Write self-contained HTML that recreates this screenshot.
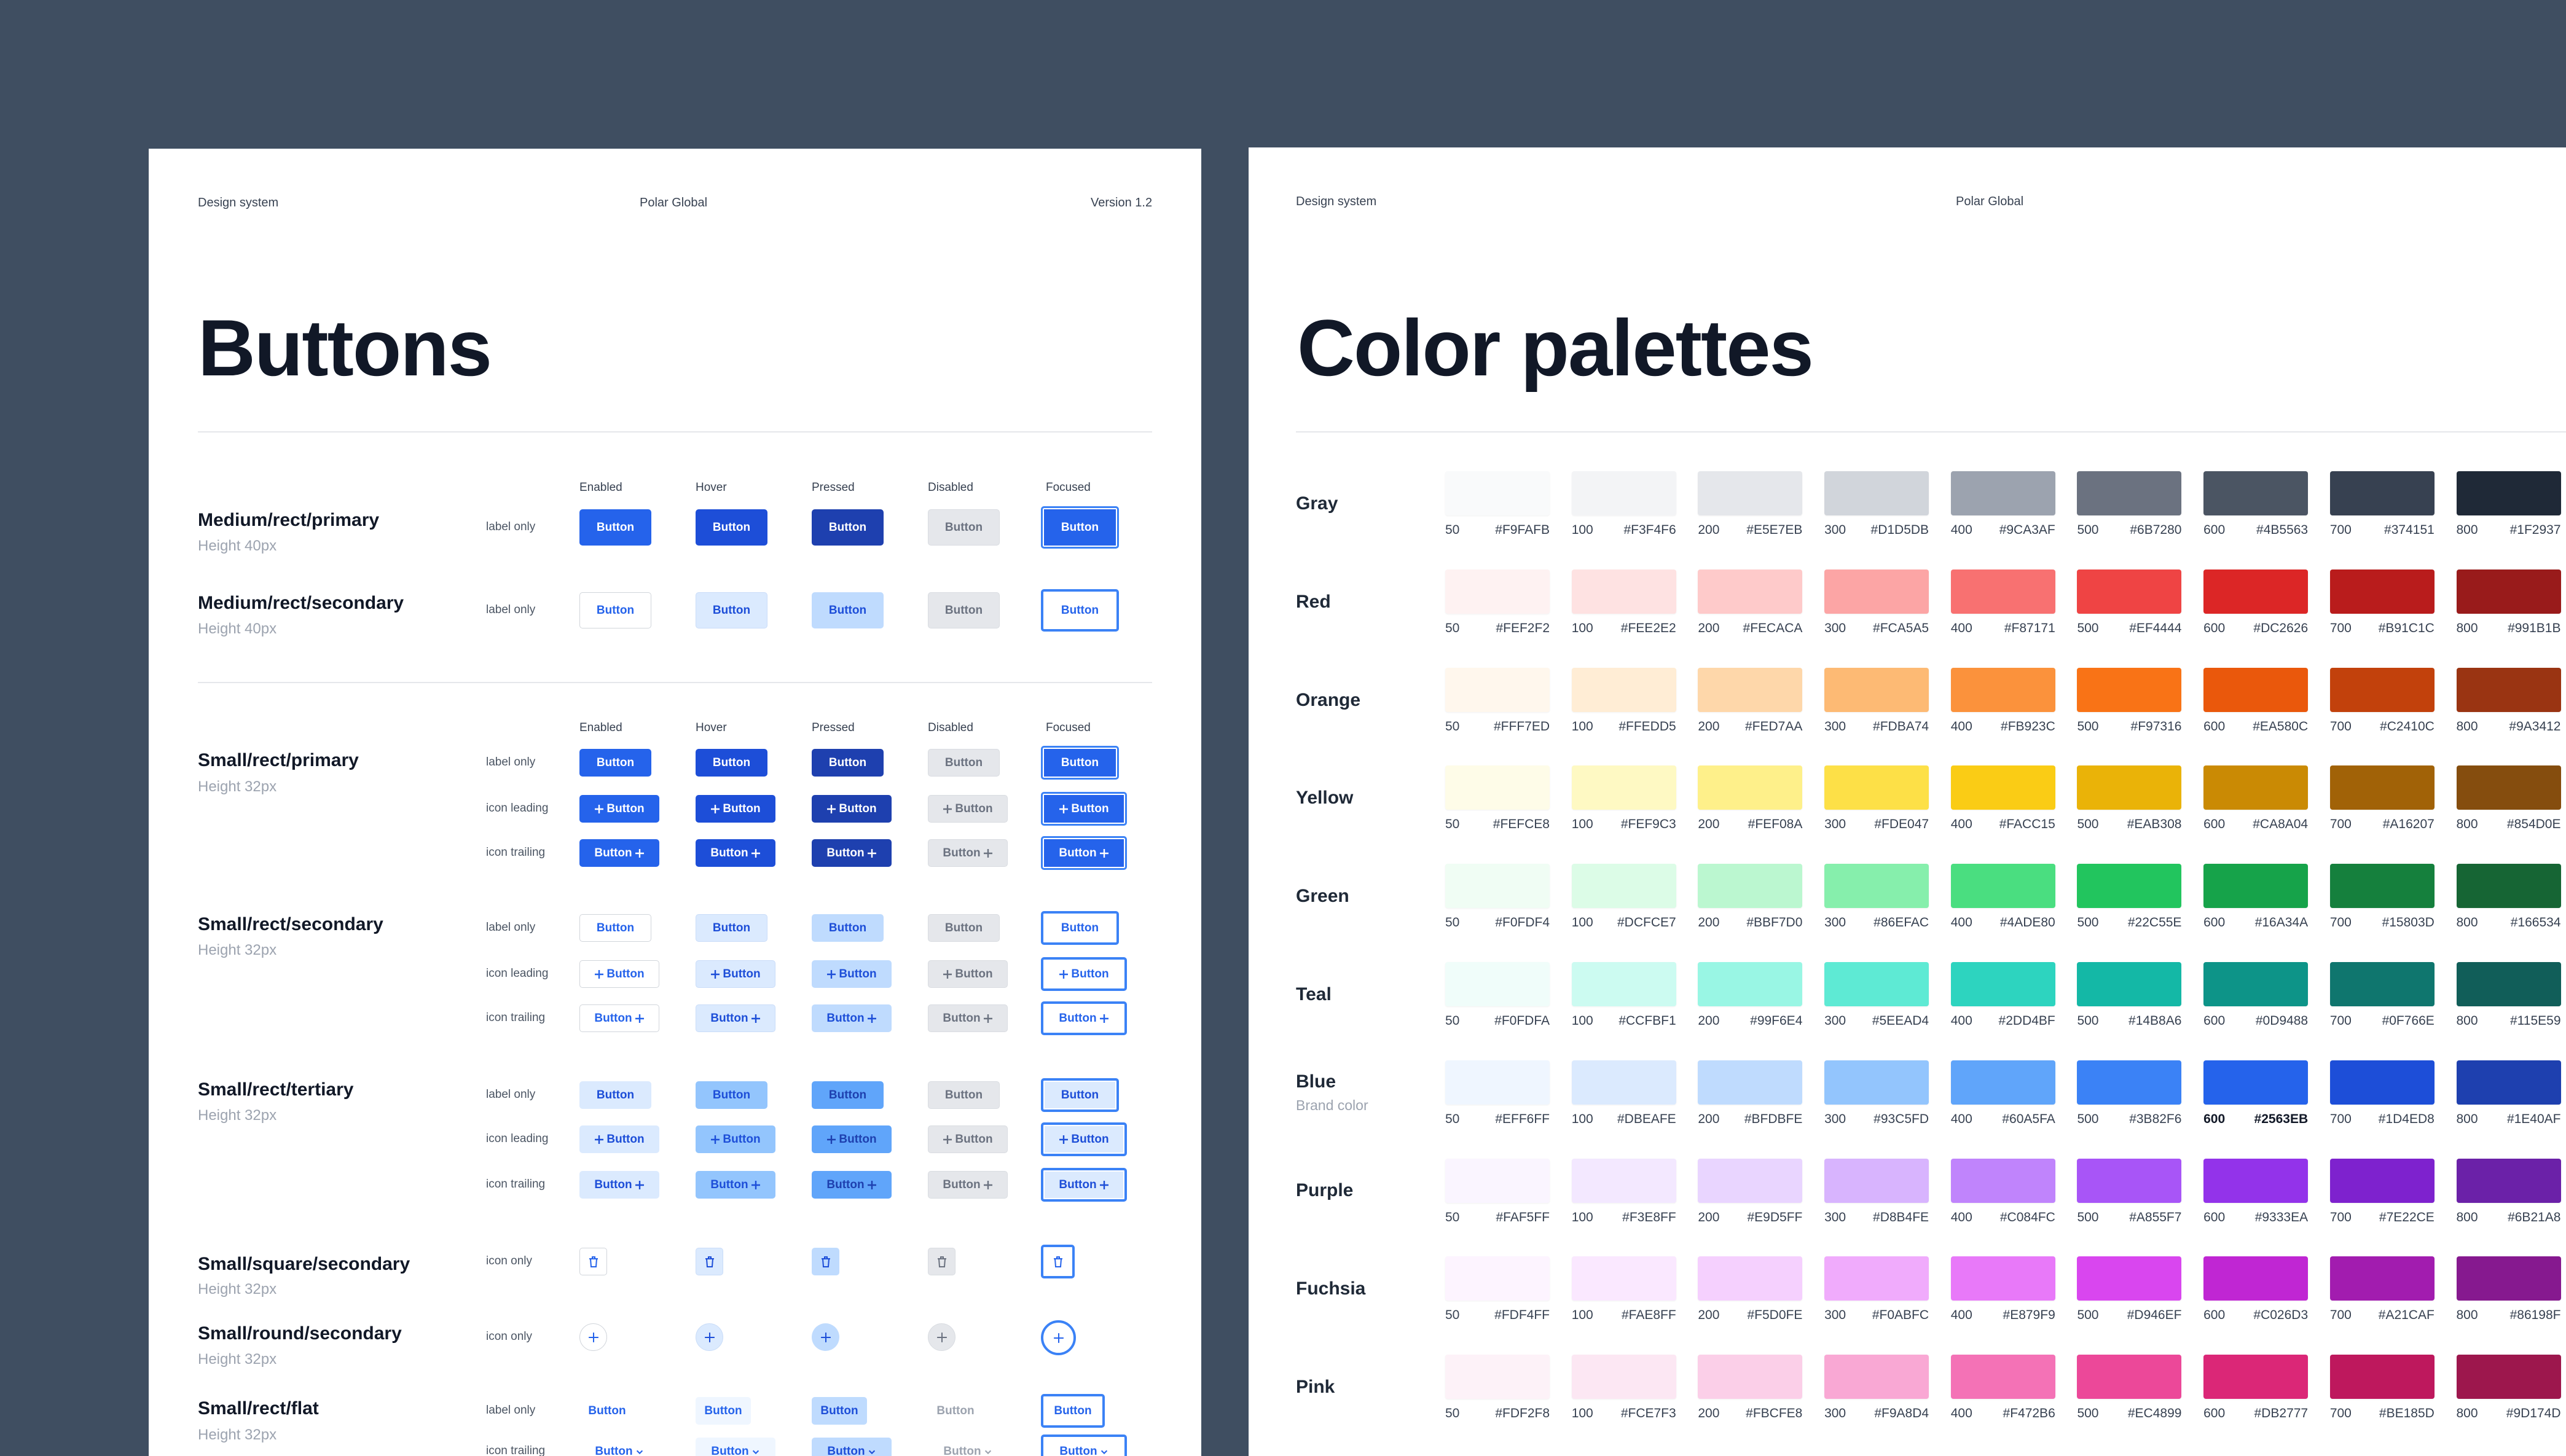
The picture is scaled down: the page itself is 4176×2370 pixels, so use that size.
<!DOCTYPE html>
<html><head><meta charset="utf-8">
<style>
*{margin:0;padding:0;box-sizing:border-box}
html{width:4176px;height:2370px;overflow:hidden}
body{width:4176px;height:2370px;background:#3F4E61;position:relative;overflow:hidden;font-family:"Liberation Sans",sans-serif;color:#111827}
.panel{position:absolute;background:#fff}
.t{position:absolute;white-space:nowrap;line-height:40px}
.hd{font-size:20px;color:#374151}
.title{position:absolute;font-size:130px;font-weight:bold;line-height:132px;letter-spacing:-2px;color:#111827;white-space:nowrap}
.hr{position:absolute;height:2px;background:#E5E7EB}
.lbl{font-size:30px;font-weight:bold;color:#111827}
.sub{font-size:24px;color:#9CA3AF}
.ch{font-size:19px;color:#374151}
.rl{font-size:19px;color:#4B5563}
.b{position:absolute;height:45px;width:117px;border-radius:5px;display:flex;align-items:center;justify-content:center;gap:4px;font-weight:bold;font-size:19px;white-space:nowrap}
.m{height:59px}
.w{width:130px}
.sq{width:45px}
.rd{width:45px;border-radius:50%}
.fl{width:90px}
.p0{background:#2563EB;color:#fff}
.p1{background:#1D4ED8;color:#fff}
.p2{background:#1E40AF;color:#fff}
.d{background:#E5E7EB;color:#6B7280;border:1.5px solid #D9DCE1}
.pf{background:#2563EB;color:#fff;border:3px solid #3B82F6;box-shadow:inset 0 0 0 2px #fff}
.s0{background:#fff;color:#2563EB;border:1.5px solid #D1D5DB}
.s1{background:#DBEAFE;color:#1D4ED8;border:1.5px solid #C9DCF8}
.s2{background:#BFDBFE;color:#1D4ED8}
.sf{background:#fff;color:#2563EB;border:4px solid #3B82F6}
.t0{background:#DBEAFE;color:#1D4ED8}
.t1{background:#93C5FD;color:#1D4ED8}
.t2{background:#60A5FA;color:#1E40AF}
.tf{background:#DBEAFE;color:#1D4ED8;border:4px solid #3B82F6;box-shadow:inset 0 0 0 2px #fff}
.f0{color:#2563EB}
.f1{background:#EFF6FF;color:#2563EB}
.f2{background:#BFDBFE;color:#1D4ED8}
.fd{color:#9CA3AF}
.rl2{font-size:30px;font-weight:bold;color:#1F2937}
.row{position:absolute;left:2352px;display:grid;grid-template-columns:repeat(9,170px);column-gap:35.7px}
.sw{height:72px;border-radius:4px;box-shadow:0 1px 2px rgba(0,0,0,.06)}
.lb{display:flex;justify-content:space-between;margin-top:12px;font-size:21px;line-height:24px;color:#374151;white-space:nowrap}
.lb.bd{font-weight:bold;color:#111827}
</style></head><body>

<!-- LEFT PANEL -->
<div class="panel" style="left:242px;top:242px;width:1713px;height:2128px"></div>
<div class="t hd" style="left:322px;top:310px">Design system</div>
<div class="t hd" style="left:1041px;top:310px">Polar Global</div>
<div class="t hd" style="left:1775px;top:310px;width:100px;text-align:right">Version 1.2</div>
<div class="title" style="left:322px;top:500px">Buttons</div>
<div class="hr" style="left:322px;top:702px;width:1553px"></div>
<div class="hr" style="left:322px;top:1110px;width:1553px"></div>

<div class="t ch" style="left:943px;top:774px">Enabled</div>
<div class="t ch" style="left:1132px;top:774px">Hover</div>
<div class="t ch" style="left:1321px;top:774px">Pressed</div>
<div class="t ch" style="left:1510px;top:774px">Disabled</div>
<div class="t ch" style="left:1702px;top:774px">Focused</div>
<div class="t ch" style="left:943px;top:1165px">Enabled</div>
<div class="t ch" style="left:1132px;top:1165px">Hover</div>
<div class="t ch" style="left:1321px;top:1165px">Pressed</div>
<div class="t ch" style="left:1510px;top:1165px">Disabled</div>
<div class="t ch" style="left:1702px;top:1165px">Focused</div>

<div class="t lbl" style="left:322px;top:827px">Medium/rect/primary</div>
<div class="t sub" style="left:322px;top:869px">Height 40px</div>
<div class="t lbl" style="left:322px;top:962px">Medium/rect/secondary</div>
<div class="t sub" style="left:322px;top:1004px">Height 40px</div>
<div class="t lbl" style="left:322px;top:1218px">Small/rect/primary</div>
<div class="t sub" style="left:322px;top:1261px">Height 32px</div>
<div class="t lbl" style="left:322px;top:1485px">Small/rect/secondary</div>
<div class="t sub" style="left:322px;top:1527px">Height 32px</div>
<div class="t lbl" style="left:322px;top:1754px">Small/rect/tertiary</div>
<div class="t sub" style="left:322px;top:1796px">Height 32px</div>
<div class="t lbl" style="left:322px;top:2038px">Small/square/secondary</div>
<div class="t sub" style="left:322px;top:2079px">Height 32px</div>
<div class="t lbl" style="left:322px;top:2151px">Small/round/secondary</div>
<div class="t sub" style="left:322px;top:2193px">Height 32px</div>
<div class="t lbl" style="left:322px;top:2273px">Small/rect/flat</div>
<div class="t sub" style="left:322px;top:2316px">Height 32px</div>

<div class="t rl" style="left:791px;top:838px">label only</div>
<div class="t rl" style="left:791px;top:973px">label only</div>
<div class="t rl" style="left:791px;top:1221px">label only</div>
<div class="t rl" style="left:791px;top:1296px">icon leading</div>
<div class="t rl" style="left:791px;top:1368px">icon trailing</div>
<div class="t rl" style="left:791px;top:1490px">label only</div>
<div class="t rl" style="left:791px;top:1565px">icon leading</div>
<div class="t rl" style="left:791px;top:1637px">icon trailing</div>
<div class="t rl" style="left:791px;top:1762px">label only</div>
<div class="t rl" style="left:791px;top:1834px">icon leading</div>
<div class="t rl" style="left:791px;top:1908px">icon trailing</div>
<div class="t rl" style="left:791px;top:2033px">icon only</div>
<div class="t rl" style="left:791px;top:2156px">icon only</div>
<div class="t rl" style="left:791px;top:2276px">label only</div>
<div class="t rl" style="left:791px;top:2342px">icon trailing</div>

<div class="b m p0" style="left:943px;top:829px">Button</div>
<div class="b m p1" style="left:1132px;top:829px">Button</div>
<div class="b m p2" style="left:1321px;top:829px">Button</div>
<div class="b m d" style="left:1510px;top:829px">Button</div>
<div class="b m pf" style="left:1694px;top:824px;width:127px;height:69px">Button</div>
<div class="b m s0" style="left:943px;top:964px">Button</div>
<div class="b m s1" style="left:1132px;top:964px">Button</div>
<div class="b m s2" style="left:1321px;top:964px">Button</div>
<div class="b m d" style="left:1510px;top:964px">Button</div>
<div class="b m sf" style="left:1694px;top:959px;width:127px;height:69px">Button</div>

<div class="b p0" style="left:943px;top:1219px">Button</div>
<div class="b p1" style="left:1132px;top:1219px">Button</div>
<div class="b p2" style="left:1321px;top:1219px">Button</div>
<div class="b d" style="left:1510px;top:1219px">Button</div>
<div class="b pf" style="left:1694px;top:1214px;width:127px;height:55px">Button</div>

<div class="b w p0" style="left:943px;top:1294px"><svg width="16" height="16" viewBox="0 0 16 16"><path d="M8 1v14M1 8h14" stroke="currentColor" stroke-width="2.4"/></svg>Button</div>
<div class="b w p1" style="left:1132px;top:1294px"><svg width="16" height="16" viewBox="0 0 16 16"><path d="M8 1v14M1 8h14" stroke="currentColor" stroke-width="2.4"/></svg>Button</div>
<div class="b w p2" style="left:1321px;top:1294px"><svg width="16" height="16" viewBox="0 0 16 16"><path d="M8 1v14M1 8h14" stroke="currentColor" stroke-width="2.4"/></svg>Button</div>
<div class="b w d" style="left:1510px;top:1294px"><svg width="16" height="16" viewBox="0 0 16 16"><path d="M8 1v14M1 8h14" stroke="currentColor" stroke-width="2.4"/></svg>Button</div>
<div class="b w pf" style="left:1694px;top:1289px;width:140px;height:55px"><svg width="16" height="16" viewBox="0 0 16 16"><path d="M8 1v14M1 8h14" stroke="currentColor" stroke-width="2.4"/></svg>Button</div>

<div class="b w p0" style="left:943px;top:1366px">Button<svg width="16" height="16" viewBox="0 0 16 16"><path d="M8 1v14M1 8h14" stroke="currentColor" stroke-width="2.4"/></svg></div>
<div class="b w p1" style="left:1132px;top:1366px">Button<svg width="16" height="16" viewBox="0 0 16 16"><path d="M8 1v14M1 8h14" stroke="currentColor" stroke-width="2.4"/></svg></div>
<div class="b w p2" style="left:1321px;top:1366px">Button<svg width="16" height="16" viewBox="0 0 16 16"><path d="M8 1v14M1 8h14" stroke="currentColor" stroke-width="2.4"/></svg></div>
<div class="b w d" style="left:1510px;top:1366px">Button<svg width="16" height="16" viewBox="0 0 16 16"><path d="M8 1v14M1 8h14" stroke="currentColor" stroke-width="2.4"/></svg></div>
<div class="b w pf" style="left:1694px;top:1361px;width:140px;height:55px">Button<svg width="16" height="16" viewBox="0 0 16 16"><path d="M8 1v14M1 8h14" stroke="currentColor" stroke-width="2.4"/></svg></div>

<div class="b s0" style="left:943px;top:1488px">Button</div>
<div class="b s1" style="left:1132px;top:1488px">Button</div>
<div class="b s2" style="left:1321px;top:1488px">Button</div>
<div class="b d" style="left:1510px;top:1488px">Button</div>
<div class="b sf" style="left:1694px;top:1483px;width:127px;height:55px">Button</div>

<div class="b w s0" style="left:943px;top:1563px"><svg width="16" height="16" viewBox="0 0 16 16"><path d="M8 1v14M1 8h14" stroke="currentColor" stroke-width="2.4"/></svg>Button</div>
<div class="b w s1" style="left:1132px;top:1563px"><svg width="16" height="16" viewBox="0 0 16 16"><path d="M8 1v14M1 8h14" stroke="currentColor" stroke-width="2.4"/></svg>Button</div>
<div class="b w s2" style="left:1321px;top:1563px"><svg width="16" height="16" viewBox="0 0 16 16"><path d="M8 1v14M1 8h14" stroke="currentColor" stroke-width="2.4"/></svg>Button</div>
<div class="b w d" style="left:1510px;top:1563px"><svg width="16" height="16" viewBox="0 0 16 16"><path d="M8 1v14M1 8h14" stroke="currentColor" stroke-width="2.4"/></svg>Button</div>
<div class="b w sf" style="left:1694px;top:1558px;width:140px;height:55px"><svg width="16" height="16" viewBox="0 0 16 16"><path d="M8 1v14M1 8h14" stroke="currentColor" stroke-width="2.4"/></svg>Button</div>

<div class="b w s0" style="left:943px;top:1635px">Button<svg width="16" height="16" viewBox="0 0 16 16"><path d="M8 1v14M1 8h14" stroke="currentColor" stroke-width="2.4"/></svg></div>
<div class="b w s1" style="left:1132px;top:1635px">Button<svg width="16" height="16" viewBox="0 0 16 16"><path d="M8 1v14M1 8h14" stroke="currentColor" stroke-width="2.4"/></svg></div>
<div class="b w s2" style="left:1321px;top:1635px">Button<svg width="16" height="16" viewBox="0 0 16 16"><path d="M8 1v14M1 8h14" stroke="currentColor" stroke-width="2.4"/></svg></div>
<div class="b w d" style="left:1510px;top:1635px">Button<svg width="16" height="16" viewBox="0 0 16 16"><path d="M8 1v14M1 8h14" stroke="currentColor" stroke-width="2.4"/></svg></div>
<div class="b w sf" style="left:1694px;top:1630px;width:140px;height:55px">Button<svg width="16" height="16" viewBox="0 0 16 16"><path d="M8 1v14M1 8h14" stroke="currentColor" stroke-width="2.4"/></svg></div>

<div class="b t0" style="left:943px;top:1760px">Button</div>
<div class="b t1" style="left:1132px;top:1760px">Button</div>
<div class="b t2" style="left:1321px;top:1760px">Button</div>
<div class="b d" style="left:1510px;top:1760px">Button</div>
<div class="b tf" style="left:1694px;top:1755px;width:127px;height:55px">Button</div>

<div class="b w t0" style="left:943px;top:1832px"><svg width="16" height="16" viewBox="0 0 16 16"><path d="M8 1v14M1 8h14" stroke="currentColor" stroke-width="2.4"/></svg>Button</div>
<div class="b w t1" style="left:1132px;top:1832px"><svg width="16" height="16" viewBox="0 0 16 16"><path d="M8 1v14M1 8h14" stroke="currentColor" stroke-width="2.4"/></svg>Button</div>
<div class="b w t2" style="left:1321px;top:1832px"><svg width="16" height="16" viewBox="0 0 16 16"><path d="M8 1v14M1 8h14" stroke="currentColor" stroke-width="2.4"/></svg>Button</div>
<div class="b w d" style="left:1510px;top:1832px"><svg width="16" height="16" viewBox="0 0 16 16"><path d="M8 1v14M1 8h14" stroke="currentColor" stroke-width="2.4"/></svg>Button</div>
<div class="b w tf" style="left:1694px;top:1827px;width:140px;height:55px"><svg width="16" height="16" viewBox="0 0 16 16"><path d="M8 1v14M1 8h14" stroke="currentColor" stroke-width="2.4"/></svg>Button</div>

<div class="b w t0" style="left:943px;top:1906px">Button<svg width="16" height="16" viewBox="0 0 16 16"><path d="M8 1v14M1 8h14" stroke="currentColor" stroke-width="2.4"/></svg></div>
<div class="b w t1" style="left:1132px;top:1906px">Button<svg width="16" height="16" viewBox="0 0 16 16"><path d="M8 1v14M1 8h14" stroke="currentColor" stroke-width="2.4"/></svg></div>
<div class="b w t2" style="left:1321px;top:1906px">Button<svg width="16" height="16" viewBox="0 0 16 16"><path d="M8 1v14M1 8h14" stroke="currentColor" stroke-width="2.4"/></svg></div>
<div class="b w d" style="left:1510px;top:1906px">Button<svg width="16" height="16" viewBox="0 0 16 16"><path d="M8 1v14M1 8h14" stroke="currentColor" stroke-width="2.4"/></svg></div>
<div class="b w tf" style="left:1694px;top:1901px;width:140px;height:55px">Button<svg width="16" height="16" viewBox="0 0 16 16"><path d="M8 1v14M1 8h14" stroke="currentColor" stroke-width="2.4"/></svg></div>

<div class="b sq s0" style="left:943px;top:2031px"><svg width="18" height="22" viewBox="0 0 18 22" fill="none" stroke="currentColor" stroke-width="2"><path d="M2 6h14M7 6V3h4v3M4 6l1 13h8l1-13"/></svg></div>
<div class="b sq s1" style="left:1132px;top:2031px"><svg width="18" height="22" viewBox="0 0 18 22" fill="none" stroke="currentColor" stroke-width="2"><path d="M2 6h14M7 6V3h4v3M4 6l1 13h8l1-13"/></svg></div>
<div class="b sq s2" style="left:1321px;top:2031px"><svg width="18" height="22" viewBox="0 0 18 22" fill="none" stroke="currentColor" stroke-width="2"><path d="M2 6h14M7 6V3h4v3M4 6l1 13h8l1-13"/></svg></div>
<div class="b sq d" style="left:1510px;top:2031px"><svg width="18" height="22" viewBox="0 0 18 22" fill="none" stroke="currentColor" stroke-width="2"><path d="M2 6h14M7 6V3h4v3M4 6l1 13h8l1-13"/></svg></div>
<div class="b sq sf" style="left:1694px;top:2026px;width:55px;height:55px"><svg width="18" height="22" viewBox="0 0 18 22" fill="none" stroke="currentColor" stroke-width="2"><path d="M2 6h14M7 6V3h4v3M4 6l1 13h8l1-13"/></svg></div>

<div class="b rd s0" style="left:943px;top:2154px"><svg width="18" height="18" viewBox="0 0 16 16"><path d="M8 1v14M1 8h14" stroke="currentColor" stroke-width="1.8"/></svg></div>
<div class="b rd s1" style="left:1132px;top:2154px"><svg width="18" height="18" viewBox="0 0 16 16"><path d="M8 1v14M1 8h14" stroke="currentColor" stroke-width="1.8"/></svg></div>
<div class="b rd s2" style="left:1321px;top:2154px"><svg width="18" height="18" viewBox="0 0 16 16"><path d="M8 1v14M1 8h14" stroke="currentColor" stroke-width="1.8"/></svg></div>
<div class="b rd d" style="left:1510px;top:2154px"><svg width="18" height="18" viewBox="0 0 16 16"><path d="M8 1v14M1 8h14" stroke="currentColor" stroke-width="1.8"/></svg></div>
<div class="b rd sf" style="left:1694px;top:2149px;width:57px;height:57px"><svg width="18" height="18" viewBox="0 0 16 16"><path d="M8 1v14M1 8h14" stroke="currentColor" stroke-width="1.8"/></svg></div>

<div class="b fl f0" style="left:943px;top:2274px">Button</div>
<div class="b fl f1" style="left:1132px;top:2274px">Button</div>
<div class="b fl f2" style="left:1321px;top:2274px">Button</div>
<div class="b fl fd" style="left:1510px;top:2274px">Button</div>
<div class="b fl sf" style="left:1694px;top:2269px;width:104px;height:55px">Button</div>

<div class="b w f0" style="left:943px;top:2340px">Button<svg width="14" height="14" viewBox="0 0 16 16"><path d="M3 6l5 5 5-5" fill="none" stroke="currentColor" stroke-width="2.4"/></svg></div>
<div class="b w f1" style="left:1132px;top:2340px">Button<svg width="14" height="14" viewBox="0 0 16 16"><path d="M3 6l5 5 5-5" fill="none" stroke="currentColor" stroke-width="2.4"/></svg></div>
<div class="b w f2" style="left:1321px;top:2340px">Button<svg width="14" height="14" viewBox="0 0 16 16"><path d="M3 6l5 5 5-5" fill="none" stroke="currentColor" stroke-width="2.4"/></svg></div>
<div class="b w fd" style="left:1510px;top:2340px">Button<svg width="14" height="14" viewBox="0 0 16 16"><path d="M3 6l5 5 5-5" fill="none" stroke="currentColor" stroke-width="2.4"/></svg></div>
<div class="b w sf" style="left:1694px;top:2335px;width:140px;height:55px">Button<svg width="14" height="14" viewBox="0 0 16 16"><path d="M3 6l5 5 5-5" fill="none" stroke="currentColor" stroke-width="2.4"/></svg></div>

<!-- RIGHT PANEL -->
<div class="panel" style="left:2032px;top:240px;width:2144px;height:2130px"></div>
<div class="t hd" style="left:2109px;top:308px">Design system</div>
<div class="t hd" style="left:3183px;top:308px">Polar Global</div>
<div class="title" style="left:2111px;top:500px">Color palettes</div>
<div class="hr" style="left:2109px;top:702px;width:2067px"></div>

<div class="t rl2" style="left:2109px;top:800px">Gray</div>
<div class="t rl2" style="left:2109px;top:960px">Red</div>
<div class="t rl2" style="left:2109px;top:1120px">Orange</div>
<div class="t rl2" style="left:2109px;top:1279px">Yellow</div>
<div class="t rl2" style="left:2109px;top:1439px">Green</div>
<div class="t rl2" style="left:2109px;top:1599px">Teal</div>
<div class="t rl2" style="left:2109px;top:1741px">Blue</div>
<div class="t" style="left:2109px;top:1779px;font-size:23px;color:#9CA3AF">Brand color</div>
<div class="t rl2" style="left:2109px;top:1918px">Purple</div>
<div class="t rl2" style="left:2109px;top:2078px">Fuchsia</div>
<div class="t rl2" style="left:2109px;top:2238px">Pink</div>

<div class="row" style="top:767px">
<div><div class="sw" style="background:#F9FAFB"></div><div class="lb"><span>50</span><span>#F9FAFB</span></div></div>
<div><div class="sw" style="background:#F3F4F6"></div><div class="lb"><span>100</span><span>#F3F4F6</span></div></div>
<div><div class="sw" style="background:#E5E7EB"></div><div class="lb"><span>200</span><span>#E5E7EB</span></div></div>
<div><div class="sw" style="background:#D1D5DB"></div><div class="lb"><span>300</span><span>#D1D5DB</span></div></div>
<div><div class="sw" style="background:#9CA3AF"></div><div class="lb"><span>400</span><span>#9CA3AF</span></div></div>
<div><div class="sw" style="background:#6B7280"></div><div class="lb"><span>500</span><span>#6B7280</span></div></div>
<div><div class="sw" style="background:#4B5563"></div><div class="lb"><span>600</span><span>#4B5563</span></div></div>
<div><div class="sw" style="background:#374151"></div><div class="lb"><span>700</span><span>#374151</span></div></div>
<div><div class="sw" style="background:#1F2937"></div><div class="lb"><span>800</span><span>#1F2937</span></div></div>
</div>
<div class="row" style="top:927px">
<div><div class="sw" style="background:#FEF2F2"></div><div class="lb"><span>50</span><span>#FEF2F2</span></div></div>
<div><div class="sw" style="background:#FEE2E2"></div><div class="lb"><span>100</span><span>#FEE2E2</span></div></div>
<div><div class="sw" style="background:#FECACA"></div><div class="lb"><span>200</span><span>#FECACA</span></div></div>
<div><div class="sw" style="background:#FCA5A5"></div><div class="lb"><span>300</span><span>#FCA5A5</span></div></div>
<div><div class="sw" style="background:#F87171"></div><div class="lb"><span>400</span><span>#F87171</span></div></div>
<div><div class="sw" style="background:#EF4444"></div><div class="lb"><span>500</span><span>#EF4444</span></div></div>
<div><div class="sw" style="background:#DC2626"></div><div class="lb"><span>600</span><span>#DC2626</span></div></div>
<div><div class="sw" style="background:#B91C1C"></div><div class="lb"><span>700</span><span>#B91C1C</span></div></div>
<div><div class="sw" style="background:#991B1B"></div><div class="lb"><span>800</span><span>#991B1B</span></div></div>
</div>
<div class="row" style="top:1087px">
<div><div class="sw" style="background:#FFF7ED"></div><div class="lb"><span>50</span><span>#FFF7ED</span></div></div>
<div><div class="sw" style="background:#FFEDD5"></div><div class="lb"><span>100</span><span>#FFEDD5</span></div></div>
<div><div class="sw" style="background:#FED7AA"></div><div class="lb"><span>200</span><span>#FED7AA</span></div></div>
<div><div class="sw" style="background:#FDBA74"></div><div class="lb"><span>300</span><span>#FDBA74</span></div></div>
<div><div class="sw" style="background:#FB923C"></div><div class="lb"><span>400</span><span>#FB923C</span></div></div>
<div><div class="sw" style="background:#F97316"></div><div class="lb"><span>500</span><span>#F97316</span></div></div>
<div><div class="sw" style="background:#EA580C"></div><div class="lb"><span>600</span><span>#EA580C</span></div></div>
<div><div class="sw" style="background:#C2410C"></div><div class="lb"><span>700</span><span>#C2410C</span></div></div>
<div><div class="sw" style="background:#9A3412"></div><div class="lb"><span>800</span><span>#9A3412</span></div></div>
</div>
<div class="row" style="top:1246px">
<div><div class="sw" style="background:#FEFCE8"></div><div class="lb"><span>50</span><span>#FEFCE8</span></div></div>
<div><div class="sw" style="background:#FEF9C3"></div><div class="lb"><span>100</span><span>#FEF9C3</span></div></div>
<div><div class="sw" style="background:#FEF08A"></div><div class="lb"><span>200</span><span>#FEF08A</span></div></div>
<div><div class="sw" style="background:#FDE047"></div><div class="lb"><span>300</span><span>#FDE047</span></div></div>
<div><div class="sw" style="background:#FACC15"></div><div class="lb"><span>400</span><span>#FACC15</span></div></div>
<div><div class="sw" style="background:#EAB308"></div><div class="lb"><span>500</span><span>#EAB308</span></div></div>
<div><div class="sw" style="background:#CA8A04"></div><div class="lb"><span>600</span><span>#CA8A04</span></div></div>
<div><div class="sw" style="background:#A16207"></div><div class="lb"><span>700</span><span>#A16207</span></div></div>
<div><div class="sw" style="background:#854D0E"></div><div class="lb"><span>800</span><span>#854D0E</span></div></div>
</div>
<div class="row" style="top:1406px">
<div><div class="sw" style="background:#F0FDF4"></div><div class="lb"><span>50</span><span>#F0FDF4</span></div></div>
<div><div class="sw" style="background:#DCFCE7"></div><div class="lb"><span>100</span><span>#DCFCE7</span></div></div>
<div><div class="sw" style="background:#BBF7D0"></div><div class="lb"><span>200</span><span>#BBF7D0</span></div></div>
<div><div class="sw" style="background:#86EFAC"></div><div class="lb"><span>300</span><span>#86EFAC</span></div></div>
<div><div class="sw" style="background:#4ADE80"></div><div class="lb"><span>400</span><span>#4ADE80</span></div></div>
<div><div class="sw" style="background:#22C55E"></div><div class="lb"><span>500</span><span>#22C55E</span></div></div>
<div><div class="sw" style="background:#16A34A"></div><div class="lb"><span>600</span><span>#16A34A</span></div></div>
<div><div class="sw" style="background:#15803D"></div><div class="lb"><span>700</span><span>#15803D</span></div></div>
<div><div class="sw" style="background:#166534"></div><div class="lb"><span>800</span><span>#166534</span></div></div>
</div>
<div class="row" style="top:1566px">
<div><div class="sw" style="background:#F0FDFA"></div><div class="lb"><span>50</span><span>#F0FDFA</span></div></div>
<div><div class="sw" style="background:#CCFBF1"></div><div class="lb"><span>100</span><span>#CCFBF1</span></div></div>
<div><div class="sw" style="background:#99F6E4"></div><div class="lb"><span>200</span><span>#99F6E4</span></div></div>
<div><div class="sw" style="background:#5EEAD4"></div><div class="lb"><span>300</span><span>#5EEAD4</span></div></div>
<div><div class="sw" style="background:#2DD4BF"></div><div class="lb"><span>400</span><span>#2DD4BF</span></div></div>
<div><div class="sw" style="background:#14B8A6"></div><div class="lb"><span>500</span><span>#14B8A6</span></div></div>
<div><div class="sw" style="background:#0D9488"></div><div class="lb"><span>600</span><span>#0D9488</span></div></div>
<div><div class="sw" style="background:#0F766E"></div><div class="lb"><span>700</span><span>#0F766E</span></div></div>
<div><div class="sw" style="background:#115E59"></div><div class="lb"><span>800</span><span>#115E59</span></div></div>
</div>
<div class="row" style="top:1726px">
<div><div class="sw" style="background:#EFF6FF"></div><div class="lb"><span>50</span><span>#EFF6FF</span></div></div>
<div><div class="sw" style="background:#DBEAFE"></div><div class="lb"><span>100</span><span>#DBEAFE</span></div></div>
<div><div class="sw" style="background:#BFDBFE"></div><div class="lb"><span>200</span><span>#BFDBFE</span></div></div>
<div><div class="sw" style="background:#93C5FD"></div><div class="lb"><span>300</span><span>#93C5FD</span></div></div>
<div><div class="sw" style="background:#60A5FA"></div><div class="lb"><span>400</span><span>#60A5FA</span></div></div>
<div><div class="sw" style="background:#3B82F6"></div><div class="lb"><span>500</span><span>#3B82F6</span></div></div>
<div><div class="sw" style="background:#2563EB"></div><div class="lb bd"><span>600</span><span>#2563EB</span></div></div>
<div><div class="sw" style="background:#1D4ED8"></div><div class="lb"><span>700</span><span>#1D4ED8</span></div></div>
<div><div class="sw" style="background:#1E40AF"></div><div class="lb"><span>800</span><span>#1E40AF</span></div></div>
</div>
<div class="row" style="top:1886px">
<div><div class="sw" style="background:#FAF5FF"></div><div class="lb"><span>50</span><span>#FAF5FF</span></div></div>
<div><div class="sw" style="background:#F3E8FF"></div><div class="lb"><span>100</span><span>#F3E8FF</span></div></div>
<div><div class="sw" style="background:#E9D5FF"></div><div class="lb"><span>200</span><span>#E9D5FF</span></div></div>
<div><div class="sw" style="background:#D8B4FE"></div><div class="lb"><span>300</span><span>#D8B4FE</span></div></div>
<div><div class="sw" style="background:#C084FC"></div><div class="lb"><span>400</span><span>#C084FC</span></div></div>
<div><div class="sw" style="background:#A855F7"></div><div class="lb"><span>500</span><span>#A855F7</span></div></div>
<div><div class="sw" style="background:#9333EA"></div><div class="lb"><span>600</span><span>#9333EA</span></div></div>
<div><div class="sw" style="background:#7E22CE"></div><div class="lb"><span>700</span><span>#7E22CE</span></div></div>
<div><div class="sw" style="background:#6B21A8"></div><div class="lb"><span>800</span><span>#6B21A8</span></div></div>
</div>
<div class="row" style="top:2045px">
<div><div class="sw" style="background:#FDF4FF"></div><div class="lb"><span>50</span><span>#FDF4FF</span></div></div>
<div><div class="sw" style="background:#FAE8FF"></div><div class="lb"><span>100</span><span>#FAE8FF</span></div></div>
<div><div class="sw" style="background:#F5D0FE"></div><div class="lb"><span>200</span><span>#F5D0FE</span></div></div>
<div><div class="sw" style="background:#F0ABFC"></div><div class="lb"><span>300</span><span>#F0ABFC</span></div></div>
<div><div class="sw" style="background:#E879F9"></div><div class="lb"><span>400</span><span>#E879F9</span></div></div>
<div><div class="sw" style="background:#D946EF"></div><div class="lb"><span>500</span><span>#D946EF</span></div></div>
<div><div class="sw" style="background:#C026D3"></div><div class="lb"><span>600</span><span>#C026D3</span></div></div>
<div><div class="sw" style="background:#A21CAF"></div><div class="lb"><span>700</span><span>#A21CAF</span></div></div>
<div><div class="sw" style="background:#86198F"></div><div class="lb"><span>800</span><span>#86198F</span></div></div>
</div>
<div class="row" style="top:2205px">
<div><div class="sw" style="background:#FDF2F8"></div><div class="lb"><span>50</span><span>#FDF2F8</span></div></div>
<div><div class="sw" style="background:#FCE7F3"></div><div class="lb"><span>100</span><span>#FCE7F3</span></div></div>
<div><div class="sw" style="background:#FBCFE8"></div><div class="lb"><span>200</span><span>#FBCFE8</span></div></div>
<div><div class="sw" style="background:#F9A8D4"></div><div class="lb"><span>300</span><span>#F9A8D4</span></div></div>
<div><div class="sw" style="background:#F472B6"></div><div class="lb"><span>400</span><span>#F472B6</span></div></div>
<div><div class="sw" style="background:#EC4899"></div><div class="lb"><span>500</span><span>#EC4899</span></div></div>
<div><div class="sw" style="background:#DB2777"></div><div class="lb"><span>600</span><span>#DB2777</span></div></div>
<div><div class="sw" style="background:#BE185D"></div><div class="lb"><span>700</span><span>#BE185D</span></div></div>
<div><div class="sw" style="background:#9D174D"></div><div class="lb"><span>800</span><span>#9D174D</span></div></div>
</div>

</body></html>
